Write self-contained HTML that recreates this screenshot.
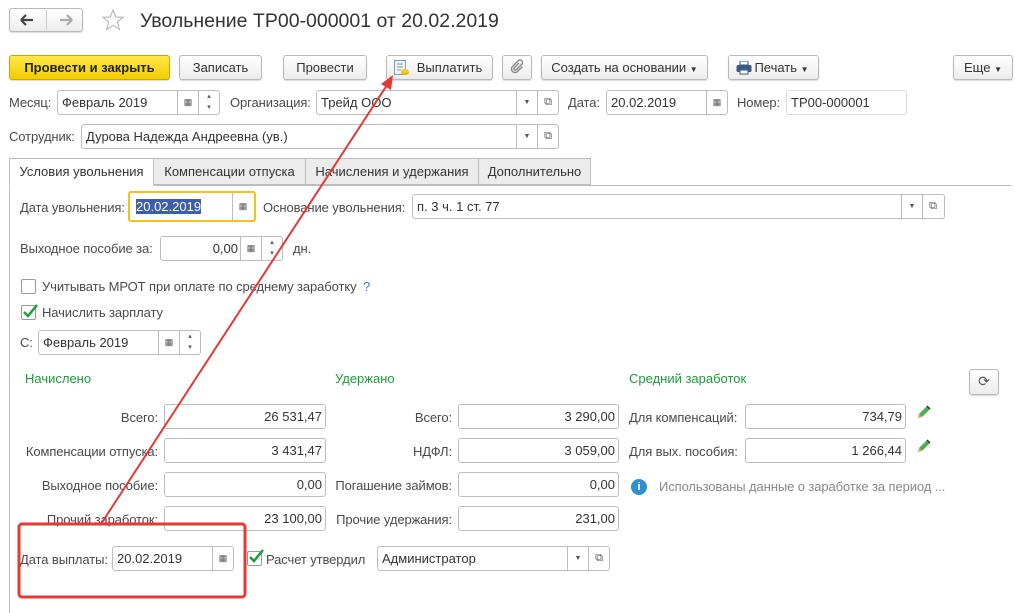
<!DOCTYPE html>
<html><head><meta charset="utf-8"><style>
*{box-sizing:border-box;margin:0;padding:0}
body{width:1015px;height:613px;background:#fff;font-family:"Liberation Sans",Arial,sans-serif;font-size:13px;color:#333;position:relative;overflow:hidden}
.a{position:absolute}
.btn{position:absolute;border:1px solid #b9b9b9;border-radius:3px;background:linear-gradient(#fff,#ececec);box-shadow:0 1px 1px rgba(0,0,0,.15);height:25px;line-height:23px;text-align:center;color:#333;font-size:13px}
.inp{position:absolute;border:1px solid #bdbdbd;border-radius:3px;background:#fff;height:25px;line-height:23px;padding:0 4px;color:#333;white-space:nowrap;overflow:hidden}
.r{text-align:right;padding-right:3px}
.sb{position:absolute;top:0;bottom:0;border-left:1px solid #bdbdbd;width:21px;text-align:center;color:#555;font-size:9px}
.lbl{position:absolute;color:#4a4a4a;white-space:nowrap;letter-spacing:-0.1px}
.g{position:absolute;color:#1a9f3a}
.cb{position:absolute;width:15px;height:15px;border:1px solid #9a9a9a;border-radius:2px;background:#fff}
.tab{position:absolute;top:158px;height:27px;line-height:26px;border:1px solid #bdbdbd;background:#ececec;text-align:center;color:#333}
</style></head><body>
<!-- nav -->
<div class="btn" style="left:9px;top:8px;width:74px;height:24px"></div>
<div class="a" style="left:46px;top:10px;width:1px;height:20px;background:#ccc"></div>
<svg class="a" style="left:18px;top:12px" width="60" height="16"><path d="M3 8h12M3 8l5-5M3 8l5 5" stroke="#444" stroke-width="2.2" fill="none"/><path d="M54 8h-12M54 8l-5-5M54 8l-5 5" stroke="#aaa" stroke-width="2.2" fill="none"/></svg>
<svg class="a" style="left:101px;top:8px" width="24" height="24"><polygon points="12,2 14.8,9 22,9.3 16.4,14 18.3,21.5 12,17.3 5.7,21.5 7.6,14 2,9.3 9.2,9" fill="none" stroke="#bbb" stroke-width="1.2"/></svg>
<div class="a" style="left:140px;top:10px;font-size:19.5px;color:#333">Увольнение ТР00-000001 от 20.02.2019</div>
<!-- toolbar -->
<div class="btn" style="left:9px;top:55px;width:161px;background:linear-gradient(#ffe94a,#f2cc00);border-color:#c9a800;font-weight:bold;color:#222">Провести и закрыть</div>
<div class="btn" style="left:179px;top:55px;width:83px">Записать</div>
<div class="btn" style="left:283px;top:55px;width:84px">Провести</div>
<div class="btn" style="left:386px;top:55px;width:107px;padding-left:20px">Выплатить</div>
<svg class="a" style="left:393px;top:59px" width="18" height="18"><rect x="1.5" y="1.5" width="11" height="14" fill="#eef2f8" stroke="#8a9ab0"/><path d="M4 5h6M4 8h6M4 11h4" stroke="#8a9ab0"/><ellipse cx="12" cy="14" rx="4" ry="2" fill="#e8b400"/><ellipse cx="12" cy="12" rx="4" ry="2" fill="#f5cc20"/></svg>
<div class="btn" style="left:502px;top:55px;width:30px"></div>
<svg class="a" style="left:509px;top:59px" width="16" height="16"><path d="M10 4l-5 5a1.5 1.5 0 0 0 2 2l6-6a2.5 2.5 0 0 0-3.5-3.5l-6 6a3.5 3.5 0 0 0 5 5l5-5" stroke="#888" stroke-width="1.4" fill="none"/></svg>
<div class="btn" style="left:541px;top:55px;width:167px">Создать на основании <span style="font-size:8px">▼</span></div>
<div class="btn" style="left:728px;top:55px;width:91px;padding-left:16px">Печать <span style="font-size:8px">▼</span></div>
<svg class="a" style="left:736px;top:61px" width="16" height="14"><rect x="4" y="0" width="8" height="4" fill="#fff" stroke="#3a5a80"/><rect x="0.5" y="4" width="15" height="7" rx="1.5" fill="#3a5a80"/><rect x="4" y="9" width="8" height="4" fill="#fff" stroke="#3a5a80"/></svg>
<div class="btn" style="left:953px;top:55px;width:60px">Еще <span style="font-size:8px">▼</span></div>
<!-- row 2 -->
<div class="lbl" style="left:9px;top:95px">Месяц:</div>
<div class="inp" style="left:57px;top:90px;width:163px">Февраль 2019<div class="sb" style="left:119px">▦</div><div class="sb" style="left:140px;line-height:11px;font-size:7px">▴<br>▾</div></div>
<div class="lbl" style="left:230px;top:95px">Организация:</div>
<div class="inp" style="left:316px;top:90px;width:243px">Трейд ООО<div class="sb" style="left:199px;font-size:7px">▼</div><div class="sb" style="left:220px;font-size:11px">⧉</div></div>
<div class="lbl" style="left:568px;top:95px">Дата:</div>
<div class="inp" style="left:606px;top:90px;width:122px">20.02.2019<div class="sb" style="left:99px">▦</div></div>
<div class="lbl" style="left:737px;top:95px">Номер:</div>
<div class="inp" style="left:786px;top:90px;width:121px;border-color:#ddd">ТР00-000001</div>
<!-- row 3 -->
<div class="lbl" style="left:9px;top:129px">Сотрудник:</div>
<div class="inp" style="left:81px;top:124px;width:478px">Дурова Надежда Андреевна (ув.)<div class="sb" style="left:434px;font-size:7px">▼</div><div class="sb" style="left:455px;font-size:11px">⧉</div></div>
<!-- tabs -->
<div class="a" style="left:9px;top:185px;width:1002px;height:1px;background:#bdbdbd"></div>
<div class="a" style="left:9px;top:185px;width:1px;height:428px;background:#bdbdbd"></div>
<div class="tab" style="left:153px;width:153px">Компенсации отпуска</div>
<div class="tab" style="left:305px;width:174px">Начисления и удержания</div>
<div class="tab" style="left:478px;width:113px">Дополнительно</div>
<div class="tab" style="left:9px;width:145px;background:#fff;border-bottom-color:#fff;height:28px">Условия увольнения</div>
<!-- panel -->
<div class="lbl" style="left:20px;top:200px">Дата увольнения:</div>
<div class="inp" style="left:128px;top:191px;width:128px;height:31px;border:2px solid #f3c21b;line-height:27px;padding-left:6px"><span style="background:#3d5ea8;color:#fff">20.02.2019</span><div class="sb" style="left:102px">▦</div></div>
<div class="lbl" style="left:263px;top:200px">Основание увольнения:</div>
<div class="inp" style="left:412px;top:194px;width:533px">п. 3 ч. 1 ст. 77<div class="sb" style="left:488px;font-size:7px">▼</div><div class="sb" style="left:509px;font-size:11px">⧉</div></div>
<div class="lbl" style="left:20px;top:241px">Выходное пособие за:</div>
<div class="inp r" style="left:160px;top:236px;width:123px;padding-right:44px">0,00<div class="sb" style="left:79px">▦</div><div class="sb" style="left:100px;line-height:11px;font-size:7px">▴<br>▾</div></div>
<div class="lbl" style="left:293px;top:241px">дн.</div>
<div class="cb" style="left:21px;top:279px"></div>
<div class="lbl" style="left:42px;top:279px">Учитывать МРОТ при оплате по среднему заработку <span style="color:#2a7fc0;margin-left:3px">?</span></div>
<div class="cb" style="left:21px;top:305px"></div>
<svg class="a" style="left:21px;top:302px" width="18" height="18"><path d="M3 10l4 4 9-11" stroke="#1a9f3a" stroke-width="2.5" fill="none"/></svg>
<div class="lbl" style="left:42px;top:305px">Начислить зарплату</div>
<div class="lbl" style="left:20px;top:335px">С:</div>
<div class="inp" style="left:38px;top:330px;width:163px">Февраль 2019<div class="sb" style="left:119px">▦</div><div class="sb" style="left:140px;line-height:11px;font-size:7px">▴<br>▾</div></div>
<div class="g" style="left:25px;top:371px">Начислено</div>
<div class="g" style="left:335px;top:371px">Удержано</div>
<div class="g" style="left:629px;top:371px">Средний заработок</div>
<div class="btn" style="left:969px;top:369px;width:30px;height:26px;font-size:14px;color:#555">⟳</div>
<!-- col1 -->
<div class="lbl" style="right:857px;top:410px">Всего:</div><div class="inp r" style="left:164px;top:404px;width:162px">26 531,47</div>
<div class="lbl" style="right:857px;top:444px">Компенсации отпуска:</div><div class="inp r" style="left:164px;top:438px;width:162px">3 431,47</div>
<div class="lbl" style="right:857px;top:478px">Выходное пособие:</div><div class="inp r" style="left:164px;top:472px;width:162px">0,00</div>
<div class="lbl" style="right:857px;top:512px">Прочий заработок:</div><div class="inp r" style="left:164px;top:506px;width:162px">23 100,00</div>
<!-- col2 -->
<div class="lbl" style="right:563px;top:410px">Всего:</div><div class="inp r" style="left:458px;top:404px;width:161px">3 290,00</div>
<div class="lbl" style="right:563px;top:444px">НДФЛ:</div><div class="inp r" style="left:458px;top:438px;width:161px">3 059,00</div>
<div class="lbl" style="right:563px;top:478px">Погашение займов:</div><div class="inp r" style="left:458px;top:472px;width:161px">0,00</div>
<div class="lbl" style="right:563px;top:512px">Прочие удержания:</div><div class="inp r" style="left:458px;top:506px;width:161px">231,00</div>
<!-- col3 -->
<div class="lbl" style="left:629px;top:410px">Для компенсаций:</div><div class="inp r" style="left:745px;top:404px;width:161px">734,79</div>
<div class="lbl" style="left:629px;top:444px">Для вых. пособия:</div><div class="inp r" style="left:745px;top:438px;width:161px">1 266,44</div>
<svg class="a" style="left:915px;top:405px" width="16" height="16"><path d="M3 13l1-4 8-8 3 3-8 8z" fill="#4caf50"/><path d="M3 13l1-4 3 3z" fill="#e8a860"/><path d="M12 1l3 3" stroke="#333" stroke-width="1.5"/></svg>
<svg class="a" style="left:915px;top:439px" width="16" height="16"><path d="M3 13l1-4 8-8 3 3-8 8z" fill="#4caf50"/><path d="M3 13l1-4 3 3z" fill="#e8a860"/><path d="M12 1l3 3" stroke="#333" stroke-width="1.5"/></svg>
<div class="a" style="left:631px;top:479px;width:16px;height:16px;border-radius:50%;background:#2f8fcf;color:#fff;font-weight:bold;font-size:11px;text-align:center;line-height:16px">i</div>
<div class="lbl" style="left:659px;top:479px;color:#888">Использованы данные о заработке за период ...</div>
<!-- bottom -->
<div class="lbl" style="left:20px;top:552px">Дата выплаты:</div>
<div class="inp" style="left:112px;top:546px;width:122px">20.02.2019<div class="sb" style="left:99px">▦</div></div>
<div class="cb" style="left:247px;top:551px"></div>
<svg class="a" style="left:247px;top:547px" width="18" height="18"><path d="M3 10l4 4 9-11" stroke="#1a9f3a" stroke-width="2.5" fill="none"/></svg>
<div class="lbl" style="left:266px;top:552px">Расчет утвердил</div>
<div class="inp" style="left:377px;top:546px;width:233px">Администратор<div class="sb" style="left:189px;font-size:7px">▼</div><div class="sb" style="left:210px;font-size:11px">⧉</div></div>
<!-- annotation -->
<svg class="a" style="left:0;top:0" width="1015" height="613">
<rect x="19" y="524" width="226" height="73" rx="3" fill="none" stroke="#e53935" stroke-width="3"/>
<line x1="101" y1="524" x2="389" y2="82" stroke="#e53935" stroke-width="2"/>
<polygon points="393,75 381,84 391,90" fill="#e53935"/>
</svg>
</body></html>
